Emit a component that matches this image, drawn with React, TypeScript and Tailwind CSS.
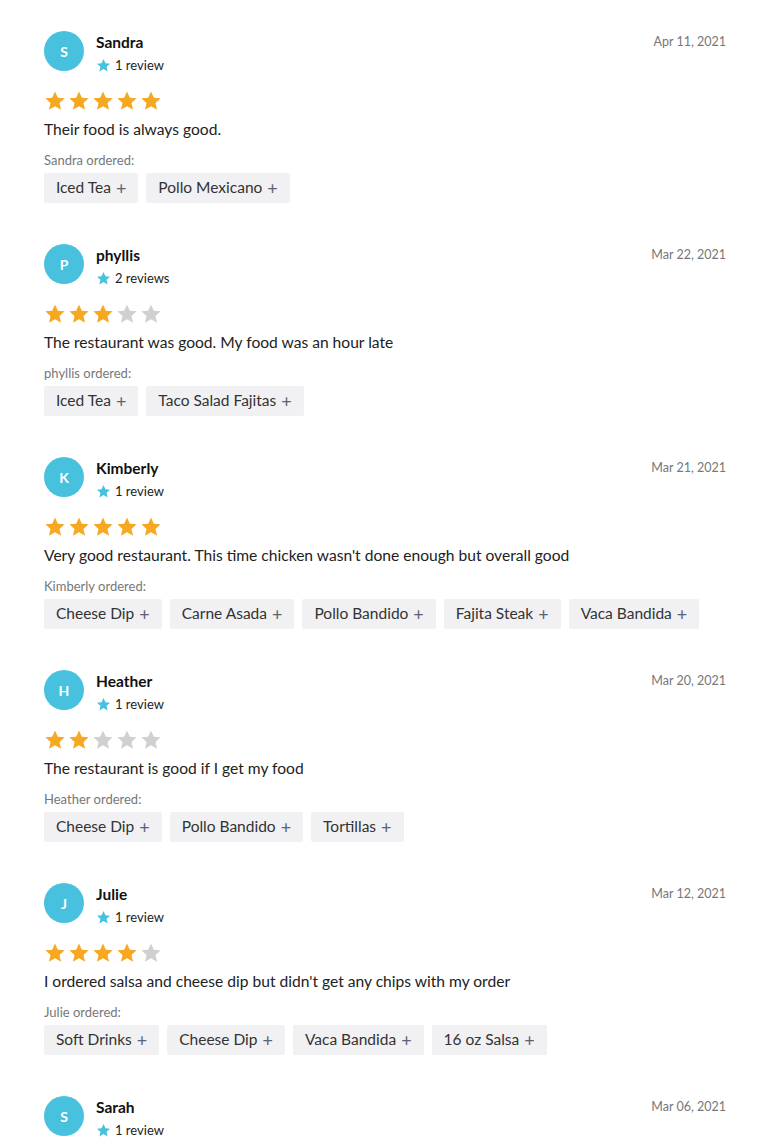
import React from "react";

type Review = {
  initial: string;
  name: string;
  reviews: string;
  date: string;
  rating: number;
  text: string;
  items: string[];
};

const data: Review[] = [
  { initial: "S", name: "Sandra", reviews: "1 review", date: "Apr 11, 2021", rating: 5, text: "Their food is always good.", items: ["Iced Tea", "Pollo Mexicano"] },
  { initial: "P", name: "phyllis", reviews: "2 reviews", date: "Mar 22, 2021", rating: 3, text: "The restaurant was good. My food was an hour late", items: ["Iced Tea", "Taco Salad Fajitas"] },
  { initial: "K", name: "Kimberly", reviews: "1 review", date: "Mar 21, 2021", rating: 5, text: "Very good restaurant. This time chicken wasn't done enough but overall good", items: ["Cheese Dip", "Carne Asada", "Pollo Bandido", "Fajita Steak", "Vaca Bandida"] },
  { initial: "H", name: "Heather", reviews: "1 review", date: "Mar 20, 2021", rating: 2, text: "The restaurant is good if I get my food", items: ["Cheese Dip", "Pollo Bandido", "Tortillas"] },
  { initial: "J", name: "Julie", reviews: "1 review", date: "Mar 12, 2021", rating: 4, text: "I ordered salsa and cheese dip but didn't get any chips with my order", items: ["Soft Drinks", "Cheese Dip", "Vaca Bandida", "16 oz Salsa"] },
  { initial: "S", name: "Sarah", reviews: "1 review", date: "Mar 06, 2021", rating: 5, text: "", items: [] },
];

const StarPath = "M12 1.5l3.1 6.9 7.4.7-5.6 5 1.7 7.4L12 17.6l-6.6 3.9 1.7-7.4-5.6-5 7.4-.7z";

function Star({ size, color }: { size: number; color: string }) {
  return (
    <svg width={size} height={size} viewBox="0 0 24 24" className="shrink-0">
      <path d={StarPath} fill={color} />
    </svg>
  );
}

function ReviewCard({ r }: { r: Review }) {
  return (
    <div className="h-[213px]">
      <div className="flex items-start">
        <div className="w-[40px] h-[40px] rounded-full bg-[#47c1de] text-white flex items-center justify-center text-[14px] font-bold">
          {r.initial}
        </div>
        <div className="ml-[12px] flex-1">
          <div className="text-[15.5px] leading-[20px] font-bold text-[#111] mt-[1px]">{r.name}</div>
          <div className="flex items-center mt-[4px] text-[13px] leading-[18px] text-[#222]">
            <Star size={15} color="#47c1de" />
            <span className="ml-[4px]">{r.reviews}</span>
          </div>
        </div>
        <div className="text-[12.5px] leading-[18px] text-[#777] mt-[2px]">{r.date}</div>
      </div>
      <div className="flex mt-[16px] gap-[2px]">
        {[0, 1, 2, 3, 4].map((i) => (
          <Star key={i} size={22} color={i < r.rating ? "#f7a823" : "#d0d0d0"} />
        ))}
      </div>
      <div className="mt-[6px] text-[15.6px] leading-[22px] text-[#222]">{r.text}</div>
      <div className="mt-[12px] text-[13px] leading-[16px] text-[#777]">{r.name} ordered:</div>
      <div className="flex gap-[8px] mt-[5px]">
        {r.items.map((it) => (
          <div key={it} className="h-[30px] px-[12px] bg-[#f1f1f3] rounded-[2px] flex items-center text-[15.5px] text-[#333]">
            {it}
            <span className="ml-[5px] text-[#5d6275] text-[18px] leading-[18px]">+</span>
          </div>
        ))}
      </div>
    </div>
  );
}

export default function App() {
  return (
    <div className="bg-white w-[770px] h-[1141px] overflow-hidden pt-[31px] px-[44px]" style={{ fontFamily: "Lato, 'Noto Sans', sans-serif" }}>
      {data.map((r, i) => (
        <ReviewCard key={i} r={r} />
      ))}
    </div>
  );
}
